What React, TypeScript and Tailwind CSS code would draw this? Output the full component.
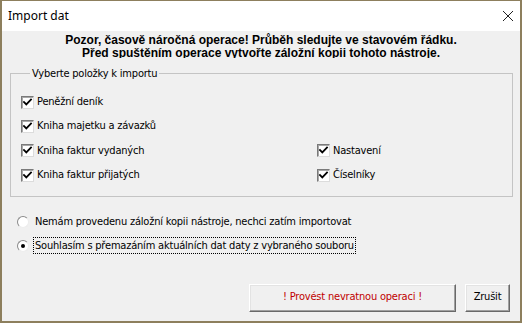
import React from 'react';

const tahoma = { fontFamily: "'DejaVu Sans Condensed', 'DejaVu Sans', sans-serif", letterSpacing: '-0.2px' };

const CheckBox = ({ label }: { label: string }) => (
  <div className="flex items-center h-[24.4px]">
    <span className="w-[13px] h-[13px] bg-white border border-t-[#7a7a7a] border-l-[#7a7a7a] border-r-[#dcdcdc] border-b-[#dcdcdc] shadow-[inset_1px_1px_#a8a8a8] flex items-center justify-center">
      <svg viewBox="0 0 11 11" className="w-[11px] h-[11px]">
        <path d="M2 5 L4.3 7.4 L9 2.6" stroke="#000" strokeWidth={1.8} fill="none" strokeLinecap="square" />
      </svg>
    </span>
    <span className="ml-[3px] text-[11px] text-black" style={tahoma}>{label}</span>
  </div>
);

const Radio = ({ label, checked, focus }: { label: string; checked?: boolean; focus?: boolean }) => (
  <div className="flex items-center h-[24px]">
    <span className="relative w-[12px] h-[12px] rounded-full bg-white border border-t-[#8a8a8a] border-l-[#8a8a8a] border-r-[#ececec] border-b-[#ececec] flex items-center justify-center">
      {checked && <span className="w-[4px] h-[4px] rounded-full bg-black" />}
    </span>
    <span
      className={
        'ml-[4px] text-[11px] text-black leading-[15px] px-[1px] ' +
        (focus ? 'border border-dotted border-black' : 'border border-transparent')
      }
      style={tahoma}
    >
      {label}
    </span>
  </div>
);

export default function App() {
  return (
    <div className="w-[522px] h-[323px] flex flex-col border-t border-l-2 border-r-2 border-b-2 border-[#8d7f5d] bg-[#f0f0f0] overflow-hidden">
      <div className="h-[30px] bg-white flex items-center justify-between pl-[6px] pr-[7px] shrink-0">
        <span className="text-[12px] text-black" style={{ fontFamily: "'Noto Sans', sans-serif" }}>Import dat</span>
        <svg viewBox="0 0 10 10" className="w-[10px] h-[10px]">
          <path d="M0 0 L10 10 M10 0 L0 10" stroke="#222" strokeWidth={1} />
        </svg>
      </div>

      <div
        className="h-[27px] pt-[3px] overflow-hidden text-center font-bold text-[12px] leading-[13px] text-black"
        style={{ fontFamily: "'Liberation Sans', Arial, sans-serif" }}
      >
        <div>Pozor, časově náročná operace! Průběh sledujte ve stavovém řádku.</div>
        <div>Před spuštěním operace vytvořte záložní kopii tohoto nástroje.</div>
      </div>

      <fieldset className="ml-[8px] mt-[9px] w-[503px] border border-[#c4c4c4] pl-[10px] pb-[8px]">
        <legend className="ml-[9px] px-[2px] text-[11px] leading-[13px] text-black" style={tahoma}>
          Vyberte položky k importu
        </legend>
        <div className="pt-[10px] grid grid-cols-[296px_1fr]">
          <CheckBox label="Peněžní deník" />
          <div />
          <CheckBox label="Kniha majetku a závazků" />
          <div />
          <CheckBox label="Kniha faktur vydaných" />
          <CheckBox label="Nastavení" />
          <CheckBox label="Kniha faktur přijatých" />
          <CheckBox label="Číselníky" />
        </div>
      </fieldset>

      <div className="pl-[15px] pt-[13px]">
        <Radio label="Nemám provedenu záložní kopii nástroje, nechci zatím importovat" />
        <Radio label="Souhlasím s přemazáním aktuálních dat daty z vybraného souboru" checked focus />
      </div>

      <div className="flex justify-end gap-[9px] pr-[10px] mt-[26px]">
        <button className="w-[207px] h-[28px] bg-[#f0f0f0] border border-t-white border-l-white border-r-[#696969] border-b-[#696969] shadow-[inset_-1px_-1px_#a0a0a0,inset_1px_1px_#e3e3e3] text-[11px] text-[#c00000]" style={tahoma}>
          ! Provést nevratnou operaci !
        </button>
        <button className="w-[45px] h-[28px] bg-[#f0f0f0] border border-t-white border-l-white border-r-[#696969] border-b-[#696969] shadow-[inset_-1px_-1px_#a0a0a0,inset_1px_1px_#e3e3e3] text-[11px] text-black" style={tahoma}>
          Zrušit
        </button>
      </div>
    </div>
  );
}
